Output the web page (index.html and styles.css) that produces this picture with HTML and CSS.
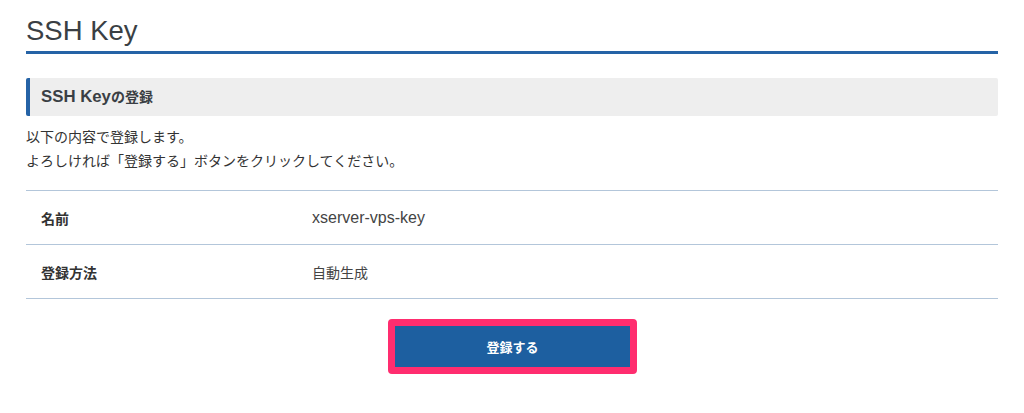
FILE: index.html
```html
<!DOCTYPE html>
<html lang="ja">
<head>
<meta charset="utf-8">
<title>SSH Key</title>
<link rel="stylesheet" href="styles.css">
</head>
<body>
<main class="page">
  <h1 class="page-title">SSH Key</h1>
  <h2 class="section-title"><span class="en">SSH Key</span>の登録</h2>
  <p class="lead">以下の内容で登録します。<br>よろしければ「登録する」ボタンをクリックしてください。</p>
  <table class="detail">
    <tr><th>名前</th><td><span class="en">xserver-vps-key</span></td></tr>
    <tr><th>登録方法</th><td>自動生成</td></tr>
  </table>
  <div class="actions">
    <button class="btn-primary" type="button">登録する</button>
  </div>
</main>
</body>
</html>
```

FILE: styles.css
```css
html, body {
  margin: 0;
  padding: 0;
  background: #ffffff;
}
body {
  font-family: "Liberation Sans", "Noto Sans CJK JP", sans-serif;
  color: #333333;
}
.page {
  padding: 15px 26px 0;
}
.en {
  font-size: 1.2em;
}
.page-title {
  margin: 0;
  font-size: 27.5px;
  font-weight: normal;
  line-height: 32px;
  color: #3a3f44;
  padding-bottom: 4px;
  border-bottom: 3px solid #2563a6;
}
.section-title {
  margin: 24px 0 0;
  height: 38px;
  box-sizing: border-box;
  background: #eeeeee;
  border-left: 4px solid #2563a6;
  border-radius: 2px;
  padding-left: 11px;
  font-size: 14px;
  font-weight: bold;
  line-height: 38px;
  color: #3a3f44;
}
.lead {
  margin: 9px 0 0;
  font-size: 14px;
  line-height: 24px;
  color: #333333;
}
.detail {
  margin-top: 17px;
  width: 100%;
  border-collapse: collapse;
  font-size: 14px;
}
.detail tr {
  border-top: 1px solid #b3c6da;
  border-bottom: 1px solid #b3c6da;
}
.detail th, .detail td {
  height: 53px;
  padding: 0;
  text-align: left;
  vertical-align: middle;
}
.detail th {
  width: 286px;
  padding-left: 15px;
  box-sizing: border-box;
  font-weight: bold;
  color: #333333;
}
.detail td {
  color: #444444;
}
.detail td .en {
  font-size: 16px;
}
.actions {
  display: flex;
  justify-content: center;
  margin-top: 20px;
}
.btn-primary {
  width: 249px;
  height: 55px;
  background: #1d5fa0;
  border: 7px solid #ff2d6f;
  border-radius: 4px;
  color: #ffffff;
  font-family: "Liberation Sans", "Noto Sans CJK JP", sans-serif;
  font-size: 13px;
  font-weight: bold;
  cursor: pointer;
  margin-left: 1px;
}
```
